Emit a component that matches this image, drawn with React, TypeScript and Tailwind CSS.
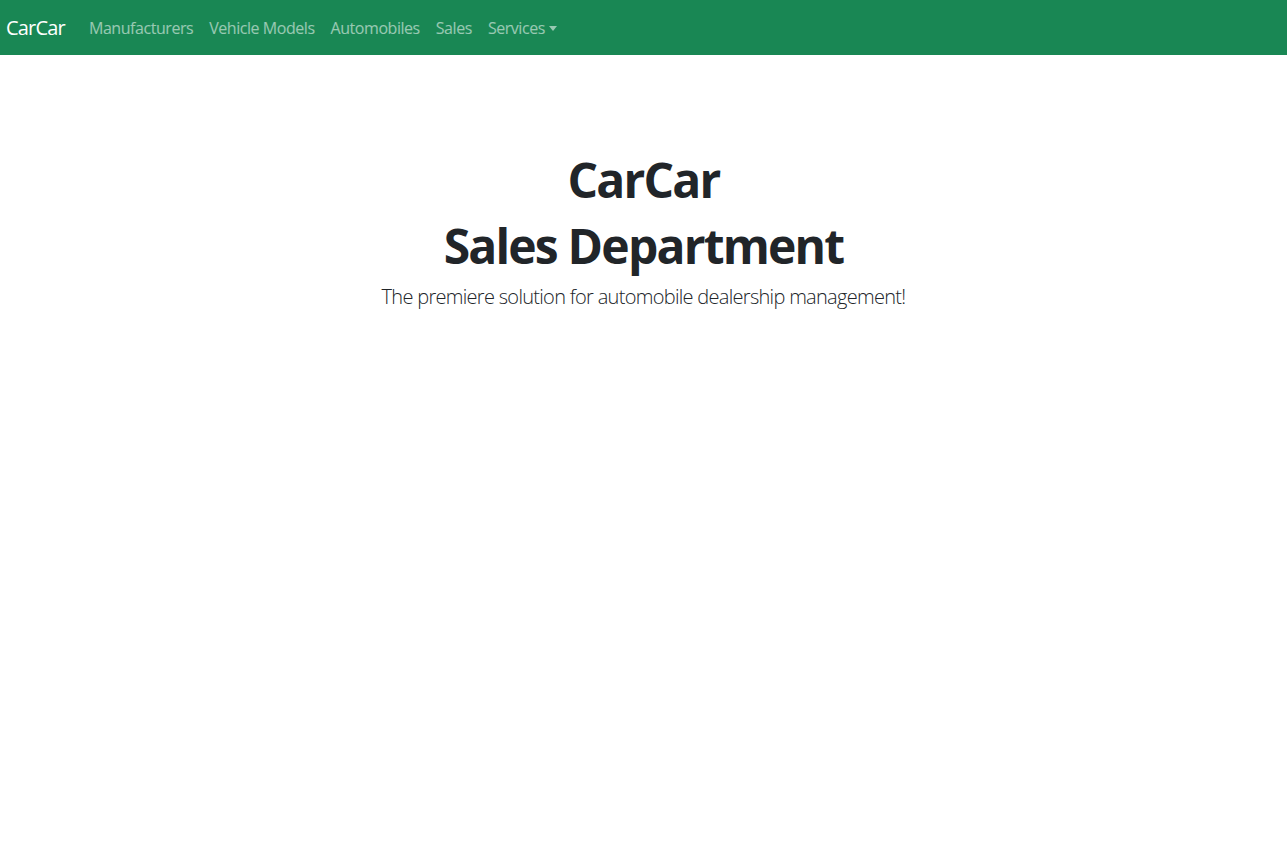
import React from 'react';

const links = ['Manufacturers', 'Vehicle Models', 'Automobiles', 'Sales'];

function Navbar() {
  return (
    <nav className="h-[55px] bg-[#198754] flex items-center pl-[6px]">
      <a className="text-[20px] leading-[30px] text-white mr-4 tracking-[-0.8px]">CarCar</a>
      <ul className="flex items-center">
        {links.map((l) => (
          <li key={l}>
            <a className="block px-2 text-[16px] leading-6 text-white/55 tracking-[-0.45px]">{l}</a>
          </li>
        ))}
        <li>
          <a className="flex items-center px-2 text-[16px] leading-6 text-white/55 tracking-[-0.45px]">
            Services
            <span className="ml-[4px] mt-[1px] border-x-[4px] border-x-transparent border-t-[5px] border-t-white/55" />
          </a>
        </li>
      </ul>
    </nav>
  );
}

export default function App() {
  return (
    <div className="min-h-screen bg-white font-['Open_Sans',sans-serif] text-[#212529]">
      <Navbar />
      <main className="px-6 my-12 py-12 text-center">
        <h1 className="mb-2 text-[48px] leading-[1.2] font-bold tracking-[-1.8px]">CarCar</h1>
        <h1 className="mb-2 text-[48px] leading-[1.2] font-bold tracking-[-1.8px]">Sales Department</h1>
        <p className="text-[20px] leading-[1.5] font-light tracking-[-0.7px]">
          The premiere solution for automobile dealership management!
        </p>
      </main>
    </div>
  );
}
